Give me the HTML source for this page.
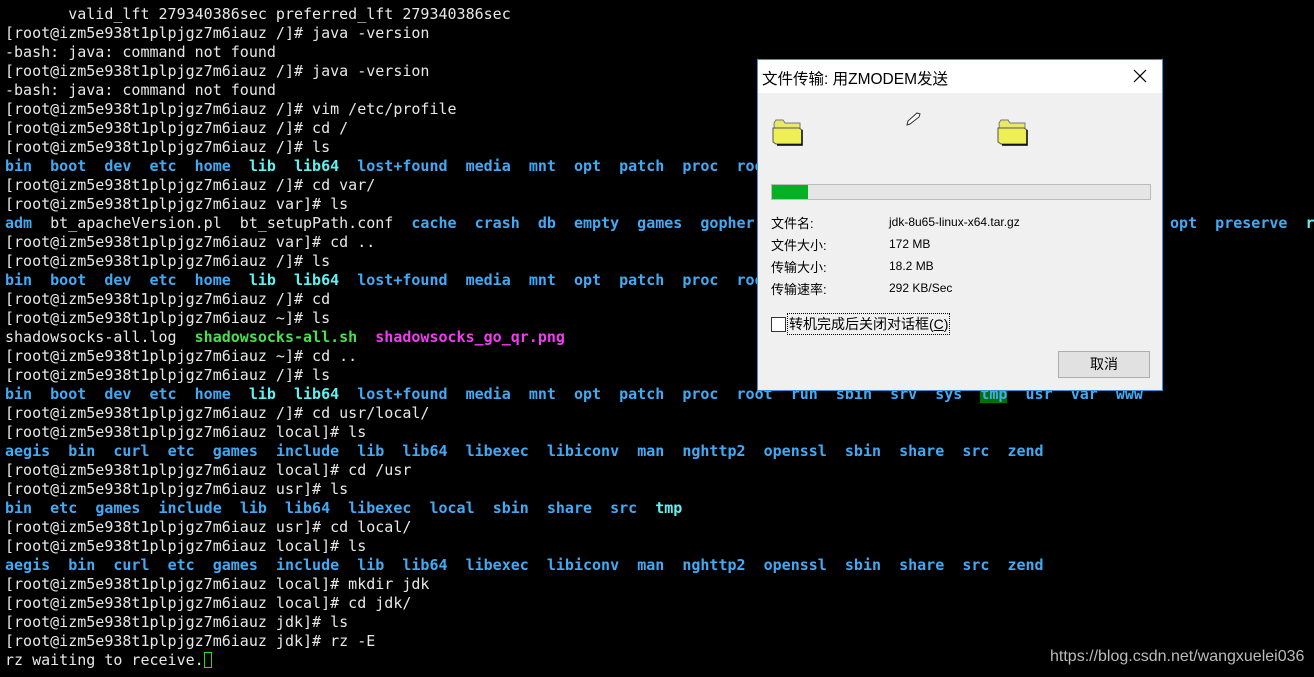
<!DOCTYPE html>
<html><head><meta charset="utf-8"><style>
html,body{margin:0;padding:0;}
body{width:1314px;height:677px;background:#000;overflow:hidden;position:relative;}
pre{margin:0;position:absolute;left:5px;top:5px;font-family:"DejaVu Sans Mono","Liberation Mono",monospace;font-size:15px;line-height:19px;color:#e8e8e8;white-space:pre;}
.d{color:#42aaf5;font-weight:bold;}
.c{color:#5ef2f2;font-weight:bold;}
.g{color:#4be04b;font-weight:bold;}
.m{color:#f23cf2;font-weight:bold;}
.t{color:#42aaf5;font-weight:bold;background:#007000;}
.cur{display:inline-block;width:8px;height:16px;border:1px solid #2bd82b;box-sizing:border-box;vertical-align:-3px;}
.dlg{position:absolute;left:757px;top:59px;width:404px;height:330px;background:#f0f0f0;border:1px solid #3b8fd6;font-family:"Liberation Sans","Noto Sans CJK SC",sans-serif;color:#000;}
.title{position:absolute;left:0;top:0;width:404px;height:33px;background:#fff;}
.title span{position:absolute;left:4px;top:7px;font-size:15.5px;}
.x{position:absolute;left:374px;top:8px;}
.lab{position:absolute;left:13px;font-size:13px;}
.val{position:absolute;left:131px;font-size:12px;}
.wm{position:absolute;left:1050px;top:648px;font-family:"Liberation Sans",sans-serif;font-size:16px;color:#bbb;}
</style></head><body>
<pre>       valid_lft 279340386sec preferred_lft 279340386sec
[root@izm5e938t1plpjgz7m6iauz /]# java -version
-bash: java: command not found
[root@izm5e938t1plpjgz7m6iauz /]# java -version
-bash: java: command not found
[root@izm5e938t1plpjgz7m6iauz /]# vim /etc/profile
[root@izm5e938t1plpjgz7m6iauz /]# cd /
[root@izm5e938t1plpjgz7m6iauz /]# ls
<span class="d">bin</span>  <span class="d">boot</span>  <span class="d">dev</span>  <span class="d">etc</span>  <span class="d">home</span>  <span class="c">lib</span>  <span class="c">lib64</span>  <span class="d">lost+found</span>  <span class="d">media</span>  <span class="d">mnt</span>  <span class="d">opt</span>  <span class="d">patch</span>  <span class="d">proc</span>  <span class="d">root</span>  <span class="d">run</span>  <span class="d">sbin</span>  <span class="d">srv</span>  <span class="d">sys</span>  <span class="t">tmp</span>  <span class="d">usr</span>  <span class="d">var</span>  <span class="d">www</span>
[root@izm5e938t1plpjgz7m6iauz /]# cd var/
[root@izm5e938t1plpjgz7m6iauz var]# ls
<span class="d">adm</span>  bt_apacheVersion.pl  bt_setupPath.conf  <span class="d">cache</span>  <span class="d">crash</span>  <span class="d">db</span>  <span class="d">empty</span>  <span class="d">games</span>  <span class="d">gopher</span>  <span class="d">kerberos</span>  <span class="d">lib</span>  <span class="d">local</span>  <span class="c">lock</span>  <span class="d">log</span>  <span class="c">mail</span>  <span class="d">nis</span>  <span class="d">opt</span>  <span class="d">preserve</span>  <span class="c">run</span>
[root@izm5e938t1plpjgz7m6iauz var]# cd ..
[root@izm5e938t1plpjgz7m6iauz /]# ls
<span class="d">bin</span>  <span class="d">boot</span>  <span class="d">dev</span>  <span class="d">etc</span>  <span class="d">home</span>  <span class="c">lib</span>  <span class="c">lib64</span>  <span class="d">lost+found</span>  <span class="d">media</span>  <span class="d">mnt</span>  <span class="d">opt</span>  <span class="d">patch</span>  <span class="d">proc</span>  <span class="d">root</span>  <span class="d">run</span>  <span class="d">sbin</span>  <span class="d">srv</span>  <span class="d">sys</span>  <span class="t">tmp</span>  <span class="d">usr</span>  <span class="d">var</span>  <span class="d">www</span>
[root@izm5e938t1plpjgz7m6iauz /]# cd
[root@izm5e938t1plpjgz7m6iauz ~]# ls
shadowsocks-all.log  <span class="g">shadowsocks-all.sh</span>  <span class="m">shadowsocks_go_qr.png</span>
[root@izm5e938t1plpjgz7m6iauz ~]# cd ..
[root@izm5e938t1plpjgz7m6iauz /]# ls
<span class="d">bin</span>  <span class="d">boot</span>  <span class="d">dev</span>  <span class="d">etc</span>  <span class="d">home</span>  <span class="c">lib</span>  <span class="c">lib64</span>  <span class="d">lost+found</span>  <span class="d">media</span>  <span class="d">mnt</span>  <span class="d">opt</span>  <span class="d">patch</span>  <span class="d">proc</span>  <span class="d">root</span>  <span class="d">run</span>  <span class="d">sbin</span>  <span class="d">srv</span>  <span class="d">sys</span>  <span class="t">tmp</span>  <span class="d">usr</span>  <span class="d">var</span>  <span class="d">www</span>
[root@izm5e938t1plpjgz7m6iauz /]# cd usr/local/
[root@izm5e938t1plpjgz7m6iauz local]# ls
<span class="d">aegis</span>  <span class="d">bin</span>  <span class="d">curl</span>  <span class="d">etc</span>  <span class="d">games</span>  <span class="d">include</span>  <span class="d">lib</span>  <span class="d">lib64</span>  <span class="d">libexec</span>  <span class="d">libiconv</span>  <span class="d">man</span>  <span class="d">nghttp2</span>  <span class="d">openssl</span>  <span class="d">sbin</span>  <span class="d">share</span>  <span class="d">src</span>  <span class="d">zend</span>
[root@izm5e938t1plpjgz7m6iauz local]# cd /usr
[root@izm5e938t1plpjgz7m6iauz usr]# ls
<span class="d">bin</span>  <span class="d">etc</span>  <span class="d">games</span>  <span class="d">include</span>  <span class="d">lib</span>  <span class="d">lib64</span>  <span class="d">libexec</span>  <span class="d">local</span>  <span class="d">sbin</span>  <span class="d">share</span>  <span class="d">src</span>  <span class="c">tmp</span>
[root@izm5e938t1plpjgz7m6iauz usr]# cd local/
[root@izm5e938t1plpjgz7m6iauz local]# ls
<span class="d">aegis</span>  <span class="d">bin</span>  <span class="d">curl</span>  <span class="d">etc</span>  <span class="d">games</span>  <span class="d">include</span>  <span class="d">lib</span>  <span class="d">lib64</span>  <span class="d">libexec</span>  <span class="d">libiconv</span>  <span class="d">man</span>  <span class="d">nghttp2</span>  <span class="d">openssl</span>  <span class="d">sbin</span>  <span class="d">share</span>  <span class="d">src</span>  <span class="d">zend</span>
[root@izm5e938t1plpjgz7m6iauz local]# mkdir jdk
[root@izm5e938t1plpjgz7m6iauz local]# cd jdk/
[root@izm5e938t1plpjgz7m6iauz jdk]# ls
[root@izm5e938t1plpjgz7m6iauz jdk]# rz -E
rz waiting to receive.<span class="cur"></span></pre>

<div class="dlg">
  <div class="title"><span>文件传输: 用ZMODEM发送</span>
    <svg class="x" width="16" height="16" viewBox="0 0 16 16"><path d="M2 2L14 14M14 2L2 14" stroke="#000" stroke-width="1.2"/></svg>
  </div>
  <svg style="position:absolute;left:14px;top:57px" width="32" height="30" viewBox="0 0 32 30">
    <path d="M2 6 L4 3 L11 3 L13 6 L28 6 L28 24 L3 24 Z" fill="#e8e86a" stroke="#777" stroke-width="1"/>
    <path d="M1 11 L27 11 L30 13 L30 27 L4 27 L1 25 Z" fill="#eeee55" stroke="#555" stroke-width="1"/>
    <path d="M30 13 L30 28 L5 28" fill="none" stroke="#000" stroke-width="1.5"/>
  </svg>
  <svg style="position:absolute;left:239px;top:57px" width="32" height="30" viewBox="0 0 32 30">
    <path d="M2 6 L4 3 L11 3 L13 6 L28 6 L28 24 L3 24 Z" fill="#e8e86a" stroke="#777" stroke-width="1"/>
    <path d="M1 11 L27 11 L30 13 L30 27 L4 27 L1 25 Z" fill="#eeee55" stroke="#555" stroke-width="1"/>
    <path d="M30 13 L30 28 L5 28" fill="none" stroke="#000" stroke-width="1.5"/>
  </svg>
  <svg style="position:absolute;left:147px;top:51px" width="18" height="16" viewBox="0 0 18 16">
    <path d="M2 14 L3 10 L12 2 L15 3 L14 6 L5 13 Z" fill="#fff" stroke="#333" stroke-width="1"/>
  </svg>
  <div style="position:absolute;left:13px;top:124px;width:378px;height:14px;background:#e6e6e6;border:1px solid #bcbcbc;">
    <div style="width:36px;height:14px;background:#06b025;"></div>
  </div>
  <div class="lab" style="top:153px">文件名:</div><div class="val" style="top:155px">jdk-8u65-linux-x64.tar.gz</div>
  <div class="lab" style="top:175px">文件大小:</div><div class="val" style="top:177px">172 MB</div>
  <div class="lab" style="top:197px">传输大小:</div><div class="val" style="top:199px">18.2 MB</div>
  <div class="lab" style="top:219px">传输速率:</div><div class="val" style="top:221px">292 KB/Sec</div>
  <div style="position:absolute;left:13px;top:257px;width:13px;height:13px;border:1px solid #333;background:#fff;"></div>
  <div style="position:absolute;left:30px;top:254px;font-size:14px;outline:1px dotted #000;padding:0 1px;">转机完成后关闭对话框(<u>C</u>)</div>
  <div style="position:absolute;left:300px;top:291px;width:90px;height:25px;background:#e1e1e1;border:1px solid #adadad;font-size:14px;text-align:center;line-height:25px;">取消</div>
</div>
<div class="wm">https://blog.csdn.net/wangxuelei036</div>
</body></html>
